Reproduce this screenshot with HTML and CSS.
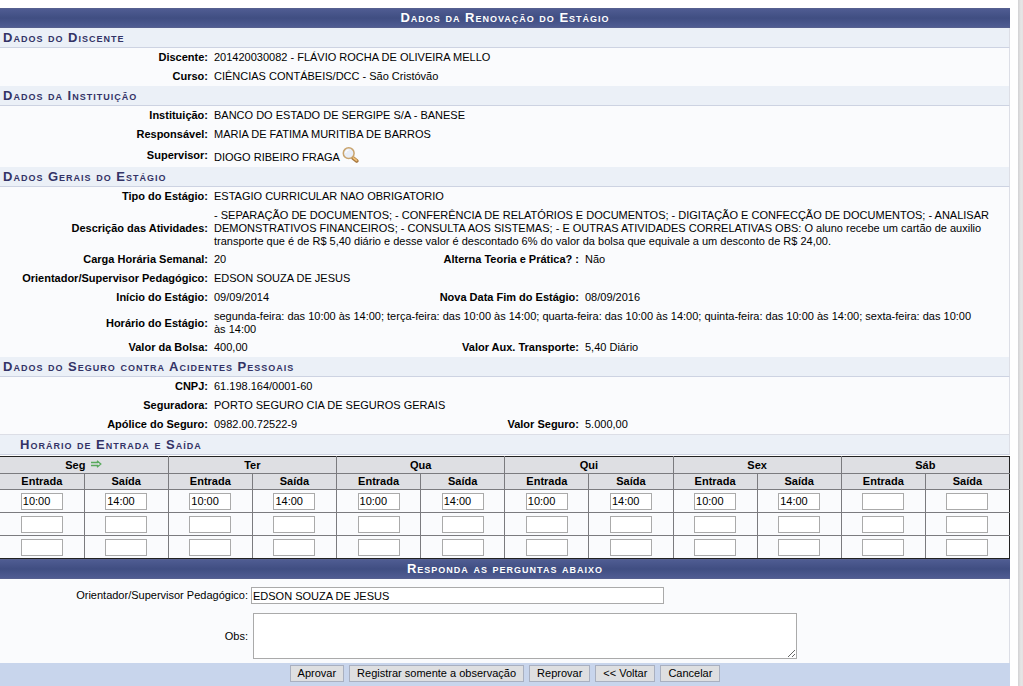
FILE: index.html
```html
<!DOCTYPE html>
<html lang="pt-BR">
<head>
<meta charset="utf-8">
<title>Dados da Renovação do Estágio</title>
<link rel="stylesheet" href="styles.css">
</head>
<body>
<div class="page">
<form class="panel">
  <h1 class="bar">Dados da Renovação do Estágio</h1>

  <h2 class="section">Dados do Discente</h2>
  <table class="info">
    <colgroup><col class="c-label"><col class="c-value"><col class="c-label2"><col></colgroup>
    <tbody>
    <tr><th>Discente:</th><td colspan="3">201420030082 - FLÁVIO ROCHA DE OLIVEIRA MELLO</td></tr>
    <tr><th>Curso:</th><td colspan="3">CIÊNCIAS CONTÁBEIS/DCC - São Cristóvão</td></tr>
    </tbody>
  </table>

  <h2 class="section">Dados da Instituição</h2>
  <table class="info">
    <colgroup><col class="c-label"><col class="c-value"><col class="c-label2"><col></colgroup>
    <tbody>
    <tr><th>Instituição:</th><td colspan="3">BANCO DO ESTADO DE SERGIPE S/A - BANESE</td></tr>
    <tr><th>Responsável:</th><td colspan="3">MARIA DE FATIMA MURITIBA DE BARROS</td></tr>
    <tr><th>Supervisor:</th><td colspan="3"><span class="person">DIOGO RIBEIRO FRAGA
      <svg class="lens" viewBox="0 0 17 17" aria-hidden="true">
        <path d="M11 11l3.800 3" stroke="#a87940" stroke-width="3.600" stroke-linecap="round"/>
        <path d="M11.500 11l3 2.400" stroke="#f0c078" stroke-width="1.800" stroke-linecap="round"/>
        <circle cx="6.700" cy="6.200" r="5.400" fill="#e9eef8" stroke="#c9a46e" stroke-width="1.500"/>
        <path d="M3.700 6a3 3 0 0 1 3-3" fill="none" stroke="#fff" stroke-width="1.200"/>
      </svg></span></td></tr>
    </tbody>
  </table>

  <h2 class="section">Dados Gerais do Estágio</h2>
  <table class="info">
    <colgroup><col class="c-label"><col class="c-value"><col class="c-label2"><col></colgroup>
    <tbody>
    <tr><th>Tipo do Estágio:</th><td colspan="3">ESTAGIO CURRICULAR NAO OBRIGATORIO</td></tr>
    <tr class="long"><th>Descrição das Atividades:</th><td colspan="3">- SEPARAÇÃO DE DOCUMENTOS; - CONFERÊNCIA DE RELATÓRIOS E DOCUMENTOS; - DIGITAÇÃO E CONFECÇÃO DE DOCUMENTOS; - ANALISAR DEMONSTRATIVOS FINANCEIROS; - CONSULTA AOS SISTEMAS; - E OUTRAS ATIVIDADES CORRELATIVAS OBS: O aluno recebe um cartão de auxilio transporte que é de R$ 5,40 diário e desse valor é descontado 6% do valor da bolsa que equivale a um desconto de R$ 24,00.</td></tr>
    <tr><th>Carga Horária Semanal:</th><td>20</td><th>Alterna Teoria e Prática? :</th><td>Não</td></tr>
    <tr><th>Orientador/Supervisor Pedagógico:</th><td colspan="3">EDSON SOUZA DE JESUS</td></tr>
    <tr><th>Início do Estágio:</th><td>09/09/2014</td><th>Nova Data Fim do Estágio:</th><td>08/09/2016</td></tr>
    <tr class="long"><th>Horário do Estágio:</th><td colspan="3">segunda-feira: das 10:00 às 14:00; terça-feira: das 10:00 às 14:00; quarta-feira: das 10:00 às 14:00; quinta-feira: das 10:00 às 14:00; sexta-feira: das 10:00 às&nbsp;14:00</td></tr>
    <tr><th>Valor da Bolsa:</th><td>400,00</td><th>Valor Aux. Transporte:</th><td>5,40 Diário</td></tr>
    </tbody>
  </table>

  <h2 class="section">Dados do Seguro contra Acidentes Pessoais</h2>
  <table class="info info-last">
    <colgroup><col class="c-label"><col class="c-value"><col class="c-label2"><col></colgroup>
    <tbody>
    <tr><th>CNPJ:</th><td colspan="3">61.198.164/0001-60</td></tr>
    <tr><th>Seguradora:</th><td colspan="3">PORTO SEGURO CIA DE SEGUROS GERAIS</td></tr>
    <tr><th>Apólice do Seguro:</th><td>0982.00.72522-9</td><th>Valor Seguro:</th><td>5.000,00</td></tr>
    </tbody>
  </table>

  <h2 class="section section-inner">Horário de Entrada e Saída</h2>
  <table class="hours">
    <thead>
    <tr class="days">
      <th colspan="2">Seg
        <svg class="arrow" viewBox="0 0 12 8" aria-hidden="true"><path d="M1 2.500h7M1 5.500h7M7 .8L10.800 4 7 7.200" fill="none" stroke="#58a95c" stroke-width="1.300"/></svg></th>
      <th colspan="2">Ter</th><th colspan="2">Qua</th><th colspan="2">Qui</th><th colspan="2">Sex</th><th colspan="2">Sáb</th>
    </tr>
    <tr class="kinds">
      <th>Entrada</th><th>Saída</th><th>Entrada</th><th>Saída</th><th>Entrada</th><th>Saída</th><th>Entrada</th><th>Saída</th><th>Entrada</th><th>Saída</th><th>Entrada</th><th>Saída</th>
    </tr>
    </thead>
    <tbody>
    <tr>
      <td><input aria-label="Seg Entrada 1" value="10:00"></td><td><input aria-label="Seg Saída 1" value="14:00"></td>
      <td><input aria-label="Ter Entrada 1" value="10:00"></td><td><input aria-label="Ter Saída 1" value="14:00"></td>
      <td><input aria-label="Qua Entrada 1" value="10:00"></td><td><input aria-label="Qua Saída 1" value="14:00"></td>
      <td><input aria-label="Qui Entrada 1" value="10:00"></td><td><input aria-label="Qui Saída 1" value="14:00"></td>
      <td><input aria-label="Sex Entrada 1" value="10:00"></td><td><input aria-label="Sex Saída 1" value="14:00"></td>
      <td><input aria-label="Sáb Entrada 1"></td><td><input aria-label="Sáb Saída 1"></td>
    </tr>
    <tr>
      <td><input aria-label="Seg Entrada 2"></td><td><input aria-label="Seg Saída 2"></td>
      <td><input aria-label="Ter Entrada 2"></td><td><input aria-label="Ter Saída 2"></td>
      <td><input aria-label="Qua Entrada 2"></td><td><input aria-label="Qua Saída 2"></td>
      <td><input aria-label="Qui Entrada 2"></td><td><input aria-label="Qui Saída 2"></td>
      <td><input aria-label="Sex Entrada 2"></td><td><input aria-label="Sex Saída 2"></td>
      <td><input aria-label="Sáb Entrada 2"></td><td><input aria-label="Sáb Saída 2"></td>
    </tr>
    <tr>
      <td><input aria-label="Seg Entrada 3"></td><td><input aria-label="Seg Saída 3"></td>
      <td><input aria-label="Ter Entrada 3"></td><td><input aria-label="Ter Saída 3"></td>
      <td><input aria-label="Qua Entrada 3"></td><td><input aria-label="Qua Saída 3"></td>
      <td><input aria-label="Qui Entrada 3"></td><td><input aria-label="Qui Saída 3"></td>
      <td><input aria-label="Sex Entrada 3"></td><td><input aria-label="Sex Saída 3"></td>
      <td><input aria-label="Sáb Entrada 3"></td><td><input aria-label="Sáb Saída 3"></td>
    </tr>
    </tbody>
  </table>

  <h2 class="bar">Responda as perguntas abaixo</h2>
  <div class="answers">
    <div class="answer">
      <label for="orientador">Orientador/Supervisor Pedagógico:</label>
      <input id="orientador" class="advisor" value="EDSON SOUZA DE JESUS">
    </div>
    <div class="answer">
      <label for="obs">Obs:</label>
      <textarea id="obs" class="obs"></textarea>
    </div>
  </div>
  <div class="actions">
    <button type="button">Aprovar</button>
    <button type="button">Registrar somente a observação</button>
    <button type="button">Reprovar</button>
    <button type="button">&lt;&lt; Voltar</button>
    <button type="button">Cancelar</button>
  </div>
</form>
<div class="edge"></div>
</div>
</body>
</html>
```
FILE: styles.css
```css
* { box-sizing: border-box; }

body {
  margin: 0;
  background: #fff;
  color: #000;
  font: 11px/13px "Liberation Sans", Arial, sans-serif;
}

input, textarea, button { font: inherit; color: inherit; margin: 0; border-radius: 0; }

.page { display: flex; gap: 8px; min-height: 100vh; }

.panel { flex: 1; min-width: 0; padding-top: 8px; }

.edge {
  width: 5px;
  background: linear-gradient(90deg, #d2d2d4, #e6e6e6 60%, #e2e2e2);
}

.bar {
  margin: 0;
  height: 20px;
  border: 1px solid #56608f;
  border-width: 1px 0;
  background: linear-gradient(#4f5c92, #404e82 50%, #4f5c92);
  color: #fff;
  font-size: 13px;
  line-height: 18px;
  font-variant: small-caps;
  letter-spacing: 1px;
  text-align: center;
}

.section {
  margin: 0;
  height: 20px;
  padding-left: 3px;
  border-right: 1px solid #dcdee6;
  border-bottom: 1px solid #cdd3e2;
  background: #ebf0f7;
  color: #333366;
  font-size: 13px;
  line-height: 20px;
  font-variant: small-caps;
  letter-spacing: 1px;
}

.section-inner { padding-left: 20px; margin-bottom: 1px; }

.info {
  width: 100%;
  table-layout: fixed;
  border-spacing: 0;
  border-right: 1px solid #dcdee6;
  background: #fafbfd;
}

.info-last { border-bottom: 1px solid #dcdee6; }

.c-label { width: 211px; }
.c-value { width: 200px; }
.c-label2 { width: 171px; }

.info th, .info td { padding: 3px; }
.info th { text-align: right; white-space: nowrap; }
.info td { text-align: left; }
.info .long th, .info .long td { padding-bottom: 2px; }

.person { display: flex; gap: 2px; align-items: flex-end; }
.lens { display: block; width: 17px; height: 17px; fill: none; }

.hours {
  width: 100%;
  table-layout: fixed;
  border-collapse: collapse;
  border: 1px solid #222;
  border-left: 0;
  background: #fafbfd;
  text-align: center;
}

.hours th, .hours td { padding: 0; border: 1px solid #7b7b7f; }
.hours tr > :first-child { border-left: 0; }
.hours tr > :last-child { border-right-color: #222; }
.hours thead tr:first-child th { border-top-color: #222; }
.hours tbody tr:last-child td { border-bottom-color: #222; }
.hours th { background: #dedfe3; }
.days { height: 17px; }
.kinds { height: 16px; }
.hours tbody tr { height: 23px; }

.hours input {
  display: block;
  width: 42px;
  height: 17px;
  margin: 0 auto;
}

.hours input, .advisor, .obs {
  padding: 0 1px;
  border: 1px solid #aaa;
  background: #fff;
}

.arrow { width: 12px; height: 8px; margin-left: 2px; vertical-align: 1px; }

.answers {
  display: grid;
  gap: 9px;
  padding: 8px 0 4px;
  border-right: 1px solid #dcdee6;
  background: #fafbfd;
}

.answer {
  display: grid;
  grid-template-columns: 248px 1fr;
  column-gap: 3px;
  align-items: center;
}

.answer label { text-align: right; }
.advisor { width: 413px; height: 17px; }
.obs { display: block; width: 544px; height: 46px; margin-left: 2px; resize: vertical; }

.actions {
  display: flex;
  justify-content: center;
  gap: 5px;
  padding: 2px 0 4px;
  background: #c8d5ec;
}

.actions button {
  height: 17px;
  padding: 0 7px;
  border: 1px solid #a9b0c0;
  background: #dedfe1;
}
```
